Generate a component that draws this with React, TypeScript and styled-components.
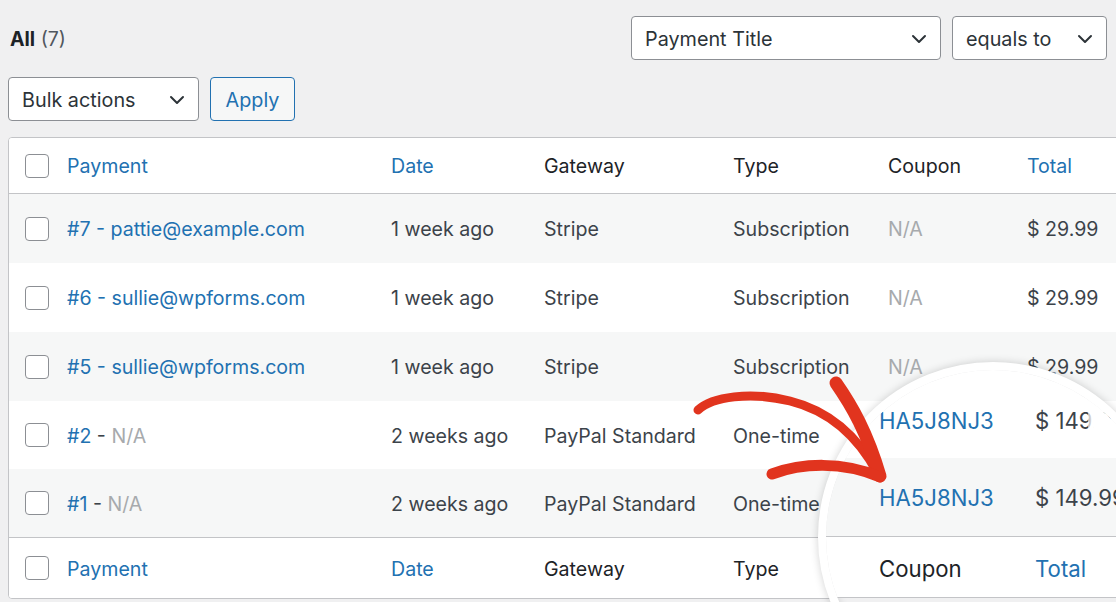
import React from "react";
import styled, { createGlobalStyle } from "styled-components";

const GlobalStyle = createGlobalStyle`
  html, body { margin: 0; padding: 0; }
  body {
    background: #f0f0f1;
    font-family: Inter, "Noto Sans", "Liberation Sans", sans-serif;
    color: #3c434a;
  }
  * { box-sizing: border-box; }
`;

const Page = styled.div`
  position: relative;
  width: 1116px;
  height: 602px;
  overflow: hidden;
  padding-left: 8px;
`;

const TopBar = styled.div`
  display: flex;
  align-items: center;
  justify-content: space-between;
  padding: 16px 9px 0 2px;
  height: 60px;
`;

const Count = styled.div`
  font-size: 19.5px;
  color: #50575e;
  padding-top: 1px;
  b { color: #1d2327; font-weight: 700; }
`;

const Filters = styled.div`
  display: flex;
  gap: 11px;
`;

const Select = styled.div<{ $w: number }>`
  width: ${(p) => p.$w}px;
  height: 44px;
  background: #fff;
  border: 1px solid #8c8f94;
  border-radius: 4px;
  display: flex;
  align-items: center;
  justify-content: space-between;
  padding: 1px 13px 0 13px;
  font-size: 19.8px;
  color: #2c3338;
`;

const Chevron = () => (
  <svg width="16" height="10" viewBox="0 0 16 10">
    <path d="M2 2 L8 8 L14 2" fill="none" stroke="#2c3338" strokeWidth="2" strokeLinecap="round" strokeLinejoin="round" />
  </svg>
);

const ActionsBar = styled.div`
  display: flex;
  gap: 11px;
  margin-top: 17px;
`;

const ApplyButton = styled.div`
  width: 85px;
  height: 44px;
  border: 1px solid #2271b1;
  border-radius: 4px;
  background: #f6f7f7;
  color: #2271b1;
  font-size: 19.8px;
  padding-top: 1px;
  display: flex;
  align-items: center;
  justify-content: center;
`;

const Table = styled.div`
  margin-top: 16px;
  width: 1140px;
  border: 1px solid #c3c4c7;
  border-radius: 4px;
  background: #fff;
  overflow: hidden;
`;

const Row = styled.div<{ $h: number; $striped?: boolean; $line?: "top" | "bottom" }>`
  display: grid;
  grid-template-columns: 42px 324px 153px 189px 155px 139px 1fr;
  align-items: center;
  padding-left: 16px;
  padding-top: 1px;
  height: ${(p) => p.$h}px;
  background: ${(p) => (p.$striped ? "#f6f7f7" : "#fff")};
  border-top: ${(p) => (p.$line === "top" ? "1px solid #c3c4c7" : "none")};
  border-bottom: ${(p) => (p.$line === "bottom" ? "1px solid #c3c4c7" : "none")};
  font-size: 19.6px;
`;

const Checkbox = styled.span`
  display: block;
  width: 24px;
  height: 24px;
  margin-top: -1px;
  border: 1px solid #8c8f94;
  border-radius: 4px;
  background: #fff;
`;

const Cell = styled.span<{ $tone?: "link" | "head" | "muted" | "body" }>`
  white-space: nowrap;
  color: ${(p) =>
    p.$tone === "link" ? "#2271b1" : p.$tone === "head" ? "#1d2327" : p.$tone === "muted" ? "#a7aaad" : "#3c434a"};
`;

const Muted = styled.span`
  color: #a7aaad;
`;
const Link = styled.span`
  color: #2271b1;
`;

const Magnifier = styled.div`
  position: absolute;
  left: 818px;
  top: 362px;
  width: 350px;
  height: 350px;
  border-radius: 50%;
  border: 8px solid #fff;
  box-shadow: 0 0 9px rgba(0, 0, 0, 0.18), inset 0 0 8px rgba(0, 0, 0, 0.12);
  overflow: hidden;
  background: #f0f0f1;
  display: flex;
  flex-direction: column;
`;

const ZoomRow = styled.div<{ $h: number; $striped?: boolean; $line?: boolean; $pt?: number }>`
  position: relative;
  flex: none;
  display: grid;
  grid-template-columns: 156px 1fr;
  align-items: center;
  height: ${(p) => p.$h}px;
  padding-left: 53px;
  padding-top: ${(p) => p.$pt || 0}px;
  background: ${(p) => (p.$striped ? "#f6f7f7" : "#fff")};
  border-bottom: ${(p) => (p.$line ? "1px solid #c3c4c7" : "none")};
  font-size: 22.2px;
  white-space: nowrap;
`;

const ZoomText = styled.span<{ $tone: "link" | "head" | "body" }>`
  color: ${(p) => (p.$tone === "link" ? "#2271b1" : p.$tone === "head" ? "#1d2327" : "#3c434a")};
`;

const Cover = styled.div`
  position: absolute;
  left: 262px;
  top: 0;
  bottom: 0;
  right: 0;
  background: linear-gradient(to right, rgba(255, 255, 255, 0.6), #fff 6px);
`;

const ArrowLayer = styled.svg`
  position: absolute;
  left: 0;
  top: 0;
  pointer-events: none;
`;

type R = { id: string; email?: string; date: string; gw: string; type: string; coupon: string; total: string };
const rows: R[] = [
  { id: "#7", email: "pattie@example.com", date: "1 week ago", gw: "Stripe", type: "Subscription", coupon: "N/A", total: "$ 29.99" },
  { id: "#6", email: "sullie@wpforms.com", date: "1 week ago", gw: "Stripe", type: "Subscription", coupon: "N/A", total: "$ 29.99" },
  { id: "#5", email: "sullie@wpforms.com", date: "1 week ago", gw: "Stripe", type: "Subscription", coupon: "N/A", total: "$ 29.99" },
  { id: "#2", date: "2 weeks ago", gw: "PayPal Standard", type: "One-time", coupon: "HA5J8NJ3", total: "$ 149.99" },
  { id: "#1", date: "2 weeks ago", gw: "PayPal Standard", type: "One-time", coupon: "HA5J8NJ3", total: "$ 149.99" },
];
const heights = [69, 69, 69, 68, 68];

const HeadCells = () => (
  <>
    <Checkbox />
    <Cell $tone="link">Payment</Cell>
    <Cell $tone="link">Date</Cell>
    <Cell $tone="head">Gateway</Cell>
    <Cell $tone="head">Type</Cell>
    <Cell $tone="head">Coupon</Cell>
    <Cell $tone="link">Total</Cell>
  </>
);

export default function App() {
  return (
    <>
      <GlobalStyle />
      <Page>
        <TopBar>
          <Count>
            <b>All</b> (7)
          </Count>
          <Filters>
            <Select $w={310}>
              Payment Title
              <Chevron />
            </Select>
            <Select $w={155}>
              equals to
              <Chevron />
            </Select>
          </Filters>
        </TopBar>
        <ActionsBar>
          <Select $w={191}>
            Bulk actions
            <Chevron />
          </Select>
          <ApplyButton>Apply</ApplyButton>
        </ActionsBar>
        <Table>
          <Row $h={56} $line="bottom">
            <HeadCells />
          </Row>
          {rows.map((r, i) => (
            <Row key={r.id} $h={heights[i]} $striped={i % 2 === 0}>
              <Checkbox />
              {r.email ? (
                <Cell $tone="link">
                  {r.id} - {r.email}
                </Cell>
              ) : (
                <Cell>
                  <Link>{r.id}</Link> - <Muted>N/A</Muted>
                </Cell>
              )}
              <Cell>{r.date}</Cell>
              <Cell>{r.gw}</Cell>
              <Cell>{r.type}</Cell>
              <Cell $tone={r.coupon === "N/A" ? "muted" : "link"}>{r.coupon}</Cell>
              <Cell>{r.total}</Cell>
            </Row>
          ))}
          <Row $h={61} $line="top">
            <HeadCells />
          </Row>
        </Table>

        <Magnifier>
          <ZoomRow $h={88} $pt={12}>
            <ZoomText $tone="link">HA5J8NJ3</ZoomText>
            <ZoomText $tone="body">$ 149.99</ZoomText>
            <Cover />
          </ZoomRow>
          <ZoomRow $h={79} $striped $line>
            <ZoomText $tone="link">HA5J8NJ3</ZoomText>
            <ZoomText $tone="body">$ 149.99</ZoomText>
          </ZoomRow>
          <ZoomRow $h={61} $line $pt={2}>
            <ZoomText $tone="head">Coupon</ZoomText>
            <ZoomText $tone="link">Total</ZoomText>
          </ZoomRow>
        </Magnifier>

        <ArrowLayer width="1116" height="602" viewBox="0 0 1116 602">
          <g fill="none" stroke="#e1341e" strokeLinecap="round" strokeLinejoin="round">
            <path d="M698 410 C 712 397, 750 391, 790 401 C 830 411, 858 436, 878 474" strokeWidth="9" />
            <path d="M836 383 C 852 406, 867 432, 880 476" strokeWidth="13" />
            <path d="M772 474 C 802 463, 842 461, 880 477" strokeWidth="11" />
          </g>
        </ArrowLayer>
      </Page>
    </>
  );
}
